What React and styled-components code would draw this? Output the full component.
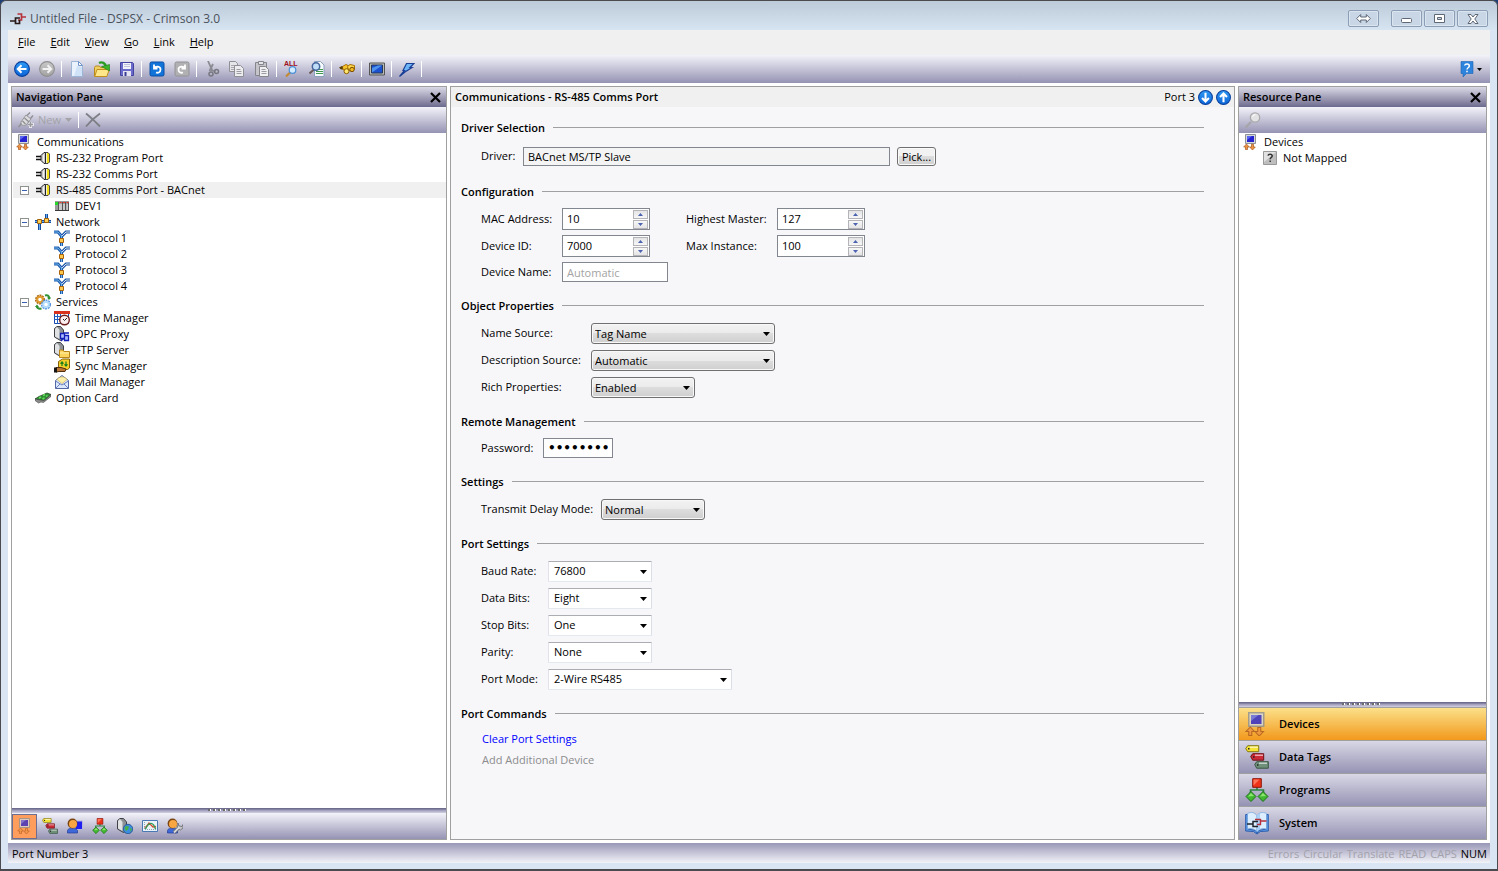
import React, { useId } from 'react';
import styled, { createGlobalStyle, css } from 'styled-components';

const GlobalStyle = createGlobalStyle`
  * { box-sizing: border-box; }
  body { margin: 0; background: #1c3f77; line-height: 14px; }
  body, button, input, select {
    font-family: 'Open Sans', 'Noto Sans', sans-serif;
    font-size: 11px;
    color: #000;
  }
  button, input, select { margin: 0; }
  ul { list-style: none; margin: 0; padding: 0; }
  svg { display: block; flex: none; }
`;

// icons

const Icon = ({ w = 16, h = 16, children }) => (
  <svg width={w} height={h} viewBox={`0 0 ${w} ${h}`} fill="none" aria-hidden="true">{children}</svg>
);

const AppIcon = () => (
  <Icon h={14}>
    <path d="M7.500 2h4v6H8M11.500 5H16" stroke="#b8323c" strokeWidth="1.700" />
    <path d="M0 9h5M10 6H5.500v5.500H9.500V8" stroke="#2a1a1a" strokeWidth="1.700" />
  </Icon>
);

const Round = ({ light, dark, rim, children, size = 16 }) => {
  const id = useId();
  return (
    <svg width={size} height={size} viewBox="0 0 16 16" fill="none" aria-hidden="true">
      <defs>
        <linearGradient id={id} x1="0" y1="0" x2="0" y2="1">
          <stop offset="0" stopColor={light} />
          <stop offset="1" stopColor={dark} />
        </linearGradient>
      </defs>
      <circle cx="8" cy="8" r="7.4" fill={`url(#${id})`} stroke={rim} strokeWidth="1.1" />
      {children}
    </svg>
  );
};

const BackIcon = () => (
  <Round light="#2f9bf5" dark="#0c63d8" rim="#0a3f9c">
    <path d="M12.5 8H4M7.5 4.2L3.8 8l3.7 3.8" stroke="#fff" strokeWidth="2" />
  </Round>
);
const ForwardIcon = () => (
  <Round light="#c9c9c9" dark="#a2a2a2" rim="#8f8f8f">
    <path d="M3.5 8H12M8.500 4.2L12.2 8l-3.700 3.800" stroke="#f2f2f2" strokeWidth="2" />
  </Round>
);
const DownIcon = () => (
  <Round light="#2f9bf5" dark="#0c63d8" rim="#0a3f9c" size={15}>
    <path d="M8 3v9M4.300 8.500L8 12.200l3.700-3.700" stroke="#fff" strokeWidth="2.200" />
  </Round>
);
const UpIcon = () => (
  <Round light="#2f9bf5" dark="#0c63d8" rim="#0a3f9c" size={15}>
    <path d="M8 13V4M4.300 7.500L8 3.800l3.700 3.700" stroke="#fff" strokeWidth="2.200" />
  </Round>
);

const NewFileIcon = () => (
  <Icon>
    <path d="M2.500 .5h7l4 4v11h-11z" fill="#eaf3fd" stroke="#9db6d6" />
    <path d="M8 5l5 1v9H5z" fill="#cfe2f8" />
    <path d="M9.500 .5v4h4z" fill="#fff" stroke="#6f95c8" />
  </Icon>
);
const OpenIcon = () => (
  <Icon>
    <path d="M.5 15.500v-9l1-1.500h4l1 1.500h5v3" fill="#f0cf62" stroke="#b88a1c" />
    <path d="M.7 15.500L3 8.500h12.300l-2.500 7z" fill="#fde788" stroke="#c08f1e" />
    <path d="M5 2c3-1.500 6.500 0 7 4" stroke="#2d9a24" strokeWidth="2.400" />
    <path d="M7.500 5.500L15.500 3.500V10z" fill="#3bb62c" stroke="#1f7d1a" strokeWidth=".6" />
  </Icon>
);
const SaveIcon = () => (
  <Icon>
    <path d="M1.500 1.500h12l1 1v12h-13z" fill="#6a6acb" stroke="#4444a0" />
    <path d="M4 2h8v6H4z" fill="#f2f2fb" />
    <path d="M5 3.500h6M5 5.500h6" stroke="#bfc0dc" />
    <path d="M4 10h8v5H4z" fill="#e3e3f2" />
    <path d="M5.500 11h2v4h-2z" fill="#3a3a94" />
  </Icon>
);
const Arrowed = ({ fill, rim, d }) => (
  <Icon>
    <rect x="1" y="1" width="14" height="14" rx="1.500" fill={fill} stroke={rim} />
    <path d={d} stroke="#fff" strokeWidth="1.800" />
  </Icon>
);
const UndoIcon = () => <Arrowed fill="#1274d8" rim="#0b4ea4" d="M5 3.500v4h3.500M5.500 7c1-2 6-2 6 1.500S8.500 12 7 11.500" />;
const RedoIcon = () => <Arrowed fill="#b1b1b3" rim="#929296" d="M11 3.500v4H7.500M10.500 7c-1-2-6-2-6 1.500S7.500 12 9 11.500" />;

const CutIcon = () => (
  <Icon>
    <path d="M4 0l4.500 10M9 3l-3.500 7" stroke="#8a8a92" strokeWidth="1.800" />
    <path d="M7 9l4.500 1.500" stroke="#8a8a92" strokeWidth="1.400" />
    <circle cx="7" cy="13" r="2" stroke="#77777f" strokeWidth="1.500" />
    <circle cx="12.500" cy="10.500" r="2" stroke="#77777f" strokeWidth="1.500" />
  </Icon>
);
const CopyIcon = () => (
  <Icon>
    <path d="M.5 .5h6l2 2v8h-8z" fill="#e6e6ea" stroke="#8f8f96" />
    <path d="M2 4.500h4M2 6.500h3M2 8.500h3" stroke="#a9a9b0" />
    <path d="M5.500 4.500h6l3 3v8h-9z" fill="#ededf0" stroke="#8f8f96" />
    <path d="M7.500 8.500h4M7.500 10.500h5M7.500 12.500h5" stroke="#9b9ba2" />
  </Icon>
);
const PasteIcon = () => (
  <Icon>
    <path d="M1.500 1.500h11v13h-11z" fill="#c4c4ca" stroke="#85858c" />
    <path d="M4.500 .5h5v3h-5z" fill="#e6e6ea" stroke="#85858c" />
    <path d="M5.500 5.500h6l3 3v7h-9z" fill="#f0f0f3" stroke="#85858c" />
    <path d="M7.500 8.500h4M7.500 10.500h5M7.500 12.500h5" stroke="#9b9ba2" />
  </Icon>
);
const FindAllIcon = () => (
  <Icon>
    <text x="0" y="5" fontSize="7" fontWeight="700" fill="#a01020" fontFamily="Liberation Sans, sans-serif">ALL</text>
    <path d="M6.500 11L2 15.500" stroke="#c28a32" strokeWidth="2.200" />
    <circle cx="8.500" cy="9" r="3.300" fill="#d3ecff" stroke="#4d8fd6" strokeWidth="1.200" />
  </Icon>
);
const FindIcon = () => (
  <Icon>
    <path d="M5.500 .5h6l3.500 3.500v11.500h-9.500z" fill="#f6fafd" stroke="#8aa1bd" />
    <path d="M7 8.500h7M7 10.500h7M7 12.500h7" stroke="#3e9a4a" />
    <path d="M5 8.500L.5 12.500" stroke="#6b5c58" strokeWidth="2" />
    <circle cx="7" cy="5.500" r="3.700" fill="#bfdcf8" stroke="#44659c" strokeWidth="1.500" />
  </Icon>
);
const BinocularsIcon = () => (
  <Icon>
    <path d="M1 7l6-3.500 3 1.500-2 5-3-1z" fill="#f6c52b" stroke="#a66f08" />
    <path d="M8.500 5.500L11 3.500l4.500 1V8l-2 2.500-4-1.500z" fill="#ffd94a" stroke="#a66f08" />
    <path d="M0 6.500L3 5l1.500 2.500L2 8.500z" fill="#5d4208" />
    <circle cx="7.500" cy="10.200" r="2.500" fill="#ffe66d" stroke="#8c5e06" />
    <circle cx="13" cy="8.500" r="2.200" fill="#f1b822" stroke="#7a4d04" />
  </Icon>
);
const ScreenIcon = () => (
  <Icon>
    <path d="M.5 2h15v12H.5z" fill="#b9bdb6" stroke="#555" />
    <path d="M2.500 4h11v8h-11z" fill="#1b50d0" stroke="#26375a" />
    <path d="M3 11.500V7l6-2.500h4z" fill="#4d93ee" />
  </Icon>
);
const FlashIcon = () => (
  <Icon>
    <path d="M7.500 2.500h7.500L11 6.500h2L6 11l-5.500 4.500L5.500 9.500H4z" fill="#6cb5f7" stroke="#1c3f96" strokeWidth="1.200" />
  </Icon>
);
const HelpIcon = () => (
  <Icon>
    <path d="M2 .5h12v12H7.500L4 16v-3.500H2z" fill="#2e83dc" stroke="#1f64b4" strokeWidth=".6" />
    <path d="M5.700 4.500C6 2.500 10.300 2.200 10.300 5c0 1.800-2.300 1.700-2.300 3.500M8 9.700v1.500" stroke="#fff" strokeWidth="1.500" />
  </Icon>
);

const PlugIcon = () => (
  <Icon>
    <path d="M3 10l5-7 5 4-5 6c-3 1-6 0-5-3z" fill="#dcdcde" stroke="#96969a" />
    <path d="M9 3.500L12 .5M12.500 6.500l2.500-3M3.500 11.500l-3 3.500M6.500 6l4.500 4M4.500 9l3 3" stroke="#8e8e92" strokeWidth="1.300" />
    <path d="M10 12.500h6M12.500 10v6" stroke="#e8e8ee" strokeWidth="3" />
    <path d="M10 12.500h5M12.500 10v5" stroke="#9a9a9e" strokeWidth="1.500" />
  </Icon>
);
const DeleteIcon = () => (
  <Icon>
    <path d="M1 1.500c4 3 9 8 14 13M15 1.500C10 5 5 9.500 1 14.500" stroke="#7d7f86" strokeWidth="1.800" />
  </Icon>
);
const SearchIcon = () => (
  <Icon>
    <path d="M6 10L.5 15.500" stroke="#a5a5a8" strokeWidth="2.200" />
    <circle cx="10" cy="5.500" r="4.700" fill="#e2e2e4" stroke="#aaaaad" strokeWidth="1.300" />
    <path d="M7.500 5a3 3 0 013-2.500" stroke="#fff" />
  </Icon>
);

const DevicesIcon = ({ size = 16 }) => (
  <svg width={size} height={size} viewBox="0 0 16 16" fill="none" aria-hidden="true">
    <path d="M2.500 .5h10v9h-10z" fill="#d5d8da" stroke="#8d9094" />
    <path d="M4 2h7v6H4z" fill="#2623d0" />
    <path d="M4 2h5l-5 4z" fill="#5a67ee" />
    <path d="M3.500 10L.7 13h1.800v2.700h2V13h1.800zM9.500 16l2.800-3h-1.800v-2.700h-2V13H6.700z" fill="#ef9442" stroke="#a9581c" strokeWidth=".7" />
  </svg>
);
const PortIcon = () => (
  <Icon>
    <path d="M1 6.500h5M1 9.500h5" stroke="#111" strokeWidth="1.600" />
    <path d="M1 8h5" stroke="#bbb" />
    <path d="M10.500 2.500H9L6 5.500v5l3 3h1.500z" fill="#c9c9c9" stroke="#222" />
    <path d="M8.500 4.500v7" stroke="#f2f2f2" />
    <path d="M11 3h1.500v10H11z" fill="#efeed8" />
    <path d="M12 3h2v10h-2z" fill="#f2dd18" />
    <path d="M10.500 2.500H13l1.500 1.500v8L13 13.500h-2.500" stroke="#222" strokeWidth=".8" />
  </Icon>
);
const PlcIcon = () => (
  <Icon>
    <path d="M1 3h14v10H1z" fill="#9a9a9a" />
    <path d="M5 6h3v6H5zM9 6h2.500v6H9zM12.500 6H14v6h-1.500z" fill="#c9c9c9" />
    <path d="M4.500 4v9M8.500 4v9M11.500 4v9M14.500 4v9" stroke="#555" />
    <path d="M1 12.500h14" stroke="#3a3a3a" />
    <path d="M1 4h3v3H1z" fill="#25d829" />
    <path d="M5.500 4h2v1h-2zM9 4h2v1H9zM12.500 4h2v1h-2z" fill="#ef3a2c" />
  </Icon>
);
const NetworkIcon = () => (
  <Icon>
    <path d="M0 7.500h16M4.500 7v9M11.500 0v7" stroke="#154b9f" strokeWidth="3" />
    <path d="M0 7.500h16M4.500 7v9M11.500 0v7" stroke="#66abec" />
    <path d="M2.500 5.500h4v4h-4zM9.500 4.500h4v4h-4z" fill="#fcd158" stroke="#a46009" />
  </Icon>
);
const ProtocolIcon = () => (
  <Icon>
    <path d="M0 2h4l3.500 4M16 2h-4L8 6M7.500 5v11" stroke="#1d5aad" strokeWidth="3" />
    <path d="M0 2h4l3.500 4M7.500 5v11" stroke="#6fb5ec" />
    <path d="M16 2h-4L8 6" stroke="#dbe3e8" />
    <path d="M5.500 8.500h4v4h-4z" fill="#fcc94e" stroke="#a86208" />
  </Icon>
);
const ServicesIcon = () => (
  <Icon>
    <path d="M10 1.500c3-1 4 .5 4.500 3.500M1.500 12c.5 2 2.500 3 5 2.500" stroke="#2f9130" strokeWidth="2" />
    <path d="M12 3.500h4l-2 2.500zM0 13l2-2.500L4 13z" fill="#2f9130" />
    <circle cx="5" cy="5.500" r="3.600" stroke="#a8640c" strokeWidth="2.800" strokeDasharray="1.700 .6" />
    <circle cx="5" cy="5.500" r="2.800" stroke="#e09a2c" strokeWidth="2" />
    <circle cx="11" cy="10.500" r="3.600" stroke="#4b8fdb" strokeWidth="2.800" strokeDasharray="1.700 .6" />
    <circle cx="11" cy="10.500" r="2.800" stroke="#b5dcfa" strokeWidth="2" />
  </Icon>
);
const TimeIcon = () => (
  <Icon>
    <path d="M.5 2.500h14v11H.5z" fill="#fff" stroke="#1747a8" />
    <path d="M0 6.500h14M0 9.500h14M3.500 4v10M6.500 4v10" stroke="#1f5fc4" />
    <path d="M0 1h16v3H0z" fill="#d9321c" />
    <circle cx="10.500" cy="10" r="4.800" fill="#fbeeee" stroke="#6e1f1c" strokeWidth="1.400" />
    <path d="M13 8l-2.500 2.500L9 9" stroke="#222" />
  </Icon>
);
const ServerBox = () => (
  <g>
    <path d="M.5 2.500L3 .5h3.500L9.500 4v9l-3 1.500L.5 11z" fill="#8d9095" stroke="#3f4145" />
    <path d="M1 3l2-2 2.500 3v9L1 10.500z" fill="#dfe1e3" />
  </g>
);
const OpcIcon = () => (
  <Icon>
    <ServerBox />
    <path d="M6.500 7.500h4v5h-4zM10.500 9.500h4v5h-4zM7 15l3-3M10 7h5" stroke="#1320b8" strokeWidth="1.300" fill="#aebcff" />
  </Icon>
);
const FtpIcon = () => (
  <Icon>
    <ServerBox />
    <path d="M5.500 8h3.500l1 1.500h5.500v6h-10z" fill="#fbd560" stroke="#b8851a" />
    <path d="M6 11h9" stroke="#fff0a8" />
  </Icon>
);
const SyncIcon = () => (
  <Icon>
    <path d="M4.500 3.500l4-2.500h7v9l-2 1.500h-9z" fill="#f6ce29" stroke="#81600a" />
    <path d="M8 8V4M6.500 5.700L8 4l1.500 1.700M12 3.500V8M10.500 6.300L12 8l1.500-1.700" stroke="#17801b" strokeWidth="1.200" />
    <path d="M2 9.500h5l5 1.500-1 2.500H5L2 14z" fill="#b9773a" stroke="#54300f" />
    <path d="M0 9.500h3v5H0z" fill="#151515" />
  </Icon>
);
const MailIcon = () => (
  <Icon>
    <path d="M1.500 6.500L8 1.500l6.500 5v8h-13z" fill="#dbe7fb" stroke="#5366a5" />
    <path d="M3 5.500c2-3.500 8-3.500 10 0L8 9.500z" fill="#fdf0a8" stroke="#cfae4a" strokeWidth=".6" />
    <path d="M1.500 7L8 11l6.500-4M1.500 14.500L6 10M14.500 14.500L10 10" stroke="#6d80bd" />
  </Icon>
);
const CardIcon = () => (
  <Icon>
    <path d="M0 9l4-2.500L12 3l4 1.500-7 6z" fill="#2d8f34" stroke="#2c4a2c" strokeWidth=".8" />
    <path d="M0 9l9 1.700 7-6V6.500l-7.500 6L6 12l-2.500 1L0 10.500z" fill="#8b8d8b" stroke="#333" strokeWidth=".5" />
    <path d="M4 8l2-1M7.500 9l2-1M8 5.500l2-1M11 6.500l1.500-1" stroke="#67e05c" strokeWidth="1.500" />
  </Icon>
);
const UnmappedIcon = () => (
  <Icon>
    <path d="M1.500 1.500h13v13h-13z" fill="#bebebe" stroke="#999" />
    <path d="M2 2h12L2 12z" fill="#e1e1e1" />
    <path d="M6 5.700C6.300 3.700 10.200 3.700 10.200 6c0 1.500-2 1.600-2 3.200M8.200 10.500v1.600" stroke="#333" strokeWidth="1.500" />
  </Icon>
);

const TagsIcon = ({ size = 16 }) => (
  <svg width={size} height={size} viewBox="0 0 24 24" fill="none" aria-hidden="true">
    <path d="M.7 3.500l2-2.800h11v6h-11z" fill="#f5e336" stroke="#857a10" />
    <path d="M5.700 11.500l2-2.800h11v6.500h-11z" fill="#cc2a36" stroke="#6f1015" />
    <path d="M9.700 19.500l2-2.800h11.600v6.500H11.700z" fill="#6f9079" stroke="#3a5443" />
    <path d="M5 2.300h8M10 10.300h8M14 18.300h8" stroke="#fff" strokeWidth="1.500" opacity=".6" />
    <path d="M3 3.700h1.500M8 12h1.500M12 20h1.500" stroke="#222" strokeWidth="1.500" />
  </svg>
);
const ProgramsIcon = ({ size = 16 }) => (
  <svg width={size} height={size} viewBox="0 0 24 24" fill="none" aria-hidden="true">
    <path d="M12 9v3M5.500 16v-4h13v4" stroke="#2c8440" strokeWidth="1.600" />
    <path d="M7.700 .7h8.600v8.600H7.700z" fill="#ef3319" stroke="#8e1408" />
    <path d="M8.500 1.500h6l-6 6z" fill="#ff7458" />
    <path d="M6 13.500l5 5-5 5-5-5zM18 13.500l5 5-5 5-5-5z" fill="#42b832" stroke="#1c701a" />
    <path d="M6 15l3 3-6 .5zM18 15l3 3-6 .5z" fill="#8be56c" />
  </svg>
);
const SystemIcon = () => (
  <Icon w={24} h={24}>
    <path d="M.7 3.500h2V18l8 1.500L12 22l1.500-2.500L21.500 18V3.500h1.800V20l-8 .5L12 23l-3.500-2.500L.7 20z" fill="#5f9ce6" stroke="#2c5dae" />
    <path d="M2.500 2.500c4-2 7-1 9.500 2v16c-3-3-6-3.500-9.500-2.500zM21.500 2.500c-4-2-7-1-9.500 2v16c3-3 6-3.500 9.500-2.500z" fill="#dceefd" stroke="#72a5de" strokeWidth=".7" />
    <path d="M12 4.500v16l3-2.500V2z" fill="#a9d0f6" />
    <path d="M10 8.500h5.500v5H12M15.500 10h6" stroke="#b5303b" strokeWidth="1.400" />
    <path d="M2 13h6M13 10.500H8v5h5" stroke="#20242c" strokeWidth="1.500" />
  </Icon>
);
const Person = () => (
  <g>
    <path d="M.5 15v-2.500c1-3.500 8.500-3.500 10 0V15z" fill="#3e68d8" stroke="#233e95" strokeWidth=".7" />
    <circle cx="5.500" cy="5.500" r="4.900" fill="#7a4410" />
    <circle cx="6" cy="6" r="4" fill="#f7a642" />
  </g>
);
const UserScreenIcon = () => (
  <Icon>
    <path d="M8 3h7.500v8.500H8z" fill="#1f1ff0" stroke="#b8b8dd" />
    <Person />
  </Icon>
);
const UserToolsIcon = () => (
  <Icon>
    <Person />
    <path d="M7 14.500l5-5" stroke="#67686c" strokeWidth="3.400" />
    <path d="M11 5l1 3 3 .5 1-2v3.500L13.500 12 10.500 10z" fill="#c4c5c8" stroke="#67686c" strokeWidth=".8" />
    <path d="M7 14.500l5.500-5.500" stroke="#d7d8db" strokeWidth="1.800" />
  </Icon>
);
const WebIcon = () => (
  <Icon>
    <ServerBox />
    <circle cx="11" cy="11" r="4.700" fill="#3c8ddd" stroke="#1c4e92" strokeWidth=".8" />
    <path d="M9 8l3 .5-1 3-2 1.500-1.500-3zM13 10l2 1-1.500 3z" fill="#48b246" />
  </Icon>
);
const ChartIcon = () => (
  <Icon>
    <path d="M.5 2.500h15v11H.5z" fill="#e9f3f8" stroke="#4a78b4" />
    <path d="M2.500 4v7.500H14" stroke="#8aa3b5" strokeDasharray="1 1" />
    <path d="M2.500 9.500l2-1L7 5l4 4 3-.5" stroke="#dd4a2e" strokeWidth="1.300" />
    <path d="M3.500 11c3-7 7.500-8 10 0" stroke="#2f9d58" strokeWidth="1.400" />
  </Icon>
);

const Cross = () => (
  <Icon w={12} h={11}><path d="M1 1l9 9M10 1l-9 9" stroke="#000" strokeWidth="2.200" /></Icon>
);
const Caret = ({ fill = '#000' }) => (
  <Icon w={7} h={4}><path d="M0 0h7L3.500 4z" fill={fill} /></Icon>
);
const SpinCaret = () => (
  <Icon w={5} h={3}><path d="M0 0h5L2.500 3z" fill="#4b62b0" /></Icon>
);

// window frame

const Window = styled.div`
  display: flex;
  flex-direction: column;
  min-height: 100vh;
  padding: 0 7px 6px;
  border: 1px solid #4a4a4f;
  border-bottom-width: 2px;
  border-radius: 6px 6px 0 0;
  background: #d9e5f2 linear-gradient(#bccad9, #d7e4f1) 0 0 / 100% 29px no-repeat;
`;

const TitleBar = styled.header`
  display: flex;
  align-items: center;
  gap: 4px;
  height: 29px;
  padding: 6px 2px 0;
`;

const TitleText = styled.h1`
  flex: 1;
  margin: 0;
  font-size: 12px;
  font-weight: 400;
  color: #4a525c;
`;

const CaptionButtons = styled.div`
  display: flex;
  gap: 2px;
`;

const CaptionButton = styled.button`
  display: grid;
  place-items: center;
  width: 31px;
  height: 17px;
  padding: 0;
  margin-right: ${({ $apart }) => ($apart ? '10px' : 0)};
  border: 1px solid #8c9eb6;
  border-radius: 2px;
  background: #c9d6e5;
  box-shadow: inset 0 0 0 1px #dbe5f0;
`;

const MenuBar = styled.nav`
  display: flex;
  align-items: center;
  gap: 1px;
  height: 25px;
  padding: 0 2px 2px 3px;
  background: #f0f0f0;
`;

const MenuButton = styled.button`
  padding: 0 7px;
  border: 0;
  background: none;
  line-height: 14px;
`;

const bar = css`
  display: flex;
  align-items: center;
  background: linear-gradient(#f3f3fa, #9593b3);
`;

const ToolBar = styled.div`
  ${bar}
  height: 28px;
  padding: 0 8px 0 1px;
`;

const ToolButton = styled.button`
  display: grid;
  place-items: center;
  width: 25px;
  height: 25px;
  padding: 0;
  border: 1px solid ${({ $active }) => ($active ? '#6f6d8f' : 'transparent')};
  background: ${({ $active }) => ($active ? '#ff9d5c' : 'none')};

  > svg { opacity: ${({ $active }) => ($active ? 0.75 : 1)}; }
`;

const Separator = styled.span`
  width: 1px;
  height: 16px;
  margin: 0 2px;
  background: #fff;
`;

const Spacer = styled.span`
  flex: 1;
`;

const HelpButton = styled.button`
  display: flex;
  align-items: center;
  gap: 2px;
  padding: 0;
  border: 0;
  background: none;
`;

const Workspace = styled.div`
  display: flex;
  flex: 1;
  gap: 3px;
  padding: 3px;
  background: #fff;
`;

const StatusBar = styled.footer`
  ${bar}
  gap: 4px;
  height: 20px;
  padding: 2px 3px 0 4px;
  background: linear-gradient(#9997b6, #f3f3f9);
`;

const Indicator = styled.span`
  color: ${({ $on }) => ($on ? '#000' : '#a3a2ab')};
`;

// panes

const Pane = styled.section`
  display: flex;
  flex-direction: column;
  flex: 0 0 ${({ $width }) => $width}px;
  border: 1px solid #a0a0a0;
`;

const PaneHeader = styled.div`
  display: flex;
  align-items: center;
  justify-content: space-between;
  height: 20px;
  padding: 0 4px;
  background: linear-gradient(#dad9e6, #6d6b8d);
`;

const PaneTitle = styled.h2`
  margin: 0;
  font-size: 11px;
  font-weight: 600;
`;

const PlainButton = styled.button`
  display: block;
  padding: 0;
  border: 0;
  background: none;
`;

const PaneTools = styled.div`
  ${bar}
  height: 26px;
  padding: 0 6px;
`;

const NewButton = styled.button`
  display: flex;
  align-items: center;
  gap: 4px;
  padding: 0 4px 0 0;
  border: 0;
  background: none;
  line-height: 14px;
  &:disabled { color: #a3a3a8; }
`;

const Tree = styled.ul`
  && {
    flex: 1;
    padding: 1px 0 0 1px;
  }
`;

const TreeRow = styled.li`
  display: flex;
  align-items: center;
  gap: 5px;
  height: 16px;
  padding-left: ${({ $level }) => [3, 7, 41][$level]}px;
  background: ${({ $selected }) => ($selected ? '#f0f0f0' : 'none')};
  white-space: nowrap;
`;

const Expander = styled.button`
  display: grid;
  place-items: center;
  width: 9px;
  height: 9px;
  margin-right: 1px;
  padding: 0;
  border: 1px solid #919191;
  background: #fff;
  visibility: ${({ $shown }) => ($shown ? 'visible' : 'hidden')};

  &::after {
    content: '';
    width: 5px;
    height: 1px;
    background: #3b5fae;
  }
`;

const Splitter = styled.div`
  display: flex;
  justify-content: center;
  height: 5px;
  background: linear-gradient(#6f6d8f 1px, #9a98b8 2px, #d2d1e1);
`;

const Grip = styled.span`
  width: 38px;
  height: 2px;
  margin: 1px 4px 0 0;
  background: repeating-linear-gradient(90deg, #6b6b6b 0 2px, #fff 2px 3px, transparent 3px 5px);
`;

const Categories = styled.div`
  ${bar}
  height: 26px;
`;

const CategoryButton = styled.button`
  display: flex;
  align-items: center;
  gap: 10px;
  height: 33px;
  padding: 0 6px;
  border: 0;
  border-top: 1px solid #a0a0a0;
  background: ${({ $active }) => ($active
    ? 'linear-gradient(#fbe08a, #f2991c)'
    : 'linear-gradient(#d9d8e6, #9593b3)')};
  font-weight: 600;
  line-height: 14px;

  > svg { opacity: ${({ $active }) => ($active ? 0.8 : 1)}; }
`;

// editor

const Editor = styled.main`
  flex: 1;
  min-width: 0;
  border: 1px solid #a0a0a0;
  background: #f7f7fa;
`;

const EditorHeader = styled.div`
  display: flex;
  align-items: center;
  gap: 3px;
  height: 20px;
  padding: 0 3px 0 4px;
  background: #f0f0f0;
`;

const Form = styled.form`
  padding: 13px 30px 0 10px;
`;

const Section = styled.fieldset`
  min-width: 0;
  margin: 0 0 16px;
  padding: 0;
  border: 0;
`;

const SectionTitle = styled.h3`
  display: flex;
  align-items: center;
  gap: 8px;
  height: 16px;
  margin: 0 0 8px;
  font-size: 11px;
  font-weight: 600;

  &::after {
    content: '';
    flex: 1;
    height: 1px;
    margin-bottom: 1px;
    background: #a0a0a0;
  }
`;

const Rows = styled.div`
  display: grid;
  grid-template-columns: ${({ $columns }) => $columns};
  align-items: center;
  row-gap: 5px;
  min-height: ${({ $tall }) => ($tall ? '24px' : 0)};
  padding-left: 20px;
  white-space: nowrap;
`;

const Line = styled.div`
  display: flex;
  align-items: center;
  gap: 7px;
`;

const TextBox = styled.input`
  width: ${({ $width }) => $width}px;
  height: ${({ readOnly }) => (readOnly ? 19 : 20)}px;
  padding: 0 4px;
  border: 1px solid #82868f;
  border-radius: 0;
  background: ${({ readOnly }) => (readOnly ? '#f4f4f4' : '#fff')};
  outline: 0;
  &::placeholder { color: #a3a3a3; opacity: 1; }
  &[type='password'] {
    font-family: 'DejaVu Sans', sans-serif;
    font-size: 12px;
    font-weight: 700;
  }
`;

const PickButton = styled.button`
  width: 39px;
  height: 19px;
  padding: 0;
  border: 1px solid #707070;
  border-radius: 3px;
  background: linear-gradient(#f2f2f2 50%, #dddddd 50%, #cfcfcf);
  box-shadow: inset 0 0 0 1px #fafafa;
`;

const NumberFrame = styled.div`
  display: flex;
  align-items: center;
  width: 88px;
  height: 22px;
  padding-right: 1px;
  border: 1px solid #82868f;
  background: #fff;
`;

const NumberInput = styled.input`
  flex: 1;
  min-width: 0;
  padding: 0 4px 2px;
  border: 0;
  background: none;
  outline: 0;
`;

const SpinButtons = styled.div`
  display: grid;
  gap: 1px;
`;

const SpinButton = styled.button`
  display: grid;
  place-items: center;
  width: 15px;
  height: 9px;
  padding: 0;
  border: 1px solid #b4b4b8;
  background: linear-gradient(#f7f7f7, #e4e4e6);
  transform: ${({ $up }) => ($up ? 'rotate(180deg)' : 'none')};
`;

const SelectFrame = styled.div`
  display: grid;
  align-items: center;
  width: ${({ $wide }) => ($wide ? 184 : 104)}px;
  height: 22px;

  > * { grid-area: 1 / 1; }
  > svg {
    justify-self: end;
    margin: 2px 5px 0 0;
    pointer-events: none;
  }
`;

const Select = styled.select`
  width: 100%;
  height: 21px;
  padding: 0 16px 0 3px;
  appearance: none;
  border: 1px solid #707070;
  border-radius: 3px;
  background: linear-gradient(#f2f2f2, #ebebeb 50%, #dddddd 50%, #cfcfcf);
  box-shadow: inset 0 0 0 1px #f8f8f8;
  outline: 0;

  ${({ $flat }) => $flat && css`
    padding: 0 16px 2px 5px;
    border-color: #abadb3 #dbdfe6 #e3e9ef #e2e3ea;
    border-radius: 1px;
    background: #fff;
    box-shadow: none;
  `}
`;

const Commands = styled.div`
  display: grid;
  justify-items: start;
  gap: 5px;
  padding: 1px 0 0 21px;
  line-height: 16px;

  a { color: #0000ff; text-decoration: none; }
  button { line-height: 16px; color: #8c8c8c; }
`;

const Text = ({ label, ...rest }) => {
  const id = useId();
  return (
    <>
      <label htmlFor={id}>{label}</label>
      <TextBox id={id} {...rest} />
    </>
  );
};

const NumberField = ({ label, value }) => {
  const id = useId();
  return (
    <>
      <label htmlFor={id}>{label}</label>
      <NumberFrame>
        <NumberInput id={id} defaultValue={value} inputMode="numeric" />
        <SpinButtons>
          <SpinButton type="button" $up aria-label="Increase"><SpinCaret /></SpinButton>
          <SpinButton type="button" aria-label="Decrease"><SpinCaret /></SpinButton>
        </SpinButtons>
      </NumberFrame>
    </>
  );
};

const SelectField = ({ label, value, wide, flat }) => {
  const id = useId();
  return (
    <>
      <label htmlFor={id}>{label}</label>
      <SelectFrame $wide={wide}>
        <Select id={id} $flat={flat} defaultValue={value}>
          <option>{value}</option>
        </Select>
        <Caret />
      </SelectFrame>
    </>
  );
};

const navigation = [
  { text: 'Communications', icon: DevicesIcon, level: 0 },
  { text: 'RS-232 Program Port', icon: PortIcon, level: 1 },
  { text: 'RS-232 Comms Port', icon: PortIcon, level: 1 },
  { text: 'RS-485 Comms Port - BACnet', icon: PortIcon, level: 1, open: true, selected: true },
  { text: 'DEV1', icon: PlcIcon, level: 2 },
  { text: 'Network', icon: NetworkIcon, level: 1, open: true },
  { text: 'Protocol 1', icon: ProtocolIcon, level: 2 },
  { text: 'Protocol 2', icon: ProtocolIcon, level: 2 },
  { text: 'Protocol 3', icon: ProtocolIcon, level: 2 },
  { text: 'Protocol 4', icon: ProtocolIcon, level: 2 },
  { text: 'Services', icon: ServicesIcon, level: 1, open: true },
  { text: 'Time Manager', icon: TimeIcon, level: 2 },
  { text: 'OPC Proxy', icon: OpcIcon, level: 2 },
  { text: 'FTP Server', icon: FtpIcon, level: 2 },
  { text: 'Sync Manager', icon: SyncIcon, level: 2 },
  { text: 'Mail Manager', icon: MailIcon, level: 2 },
  { text: 'Option Card', icon: CardIcon, level: 1 },
];

const toolbar = [
  ['Back', BackIcon], ['Forward', ForwardIcon], null,
  ['New', NewFileIcon], ['Open', OpenIcon], ['Save', SaveIcon], null,
  ['Undo', UndoIcon], ['Redo', RedoIcon], null,
  ['Cut', CutIcon], ['Copy', CopyIcon], ['Paste', PasteIcon], null,
  ['Find all', FindAllIcon], ['Find', FindIcon], null,
  ['Browse', BinocularsIcon], null,
  ['Emulator', ScreenIcon], null,
  ['Download', FlashIcon], null,
];

const views = [
  ['Communications', DevicesIcon], ['Data Tags', TagsIcon], ['Display Pages', UserScreenIcon],
  ['Programs', ProgramsIcon], ['Web Server', WebIcon], ['Data Logger', ChartIcon], ['Security', UserToolsIcon],
];

const categories = [
  ['Devices', DevicesIcon], ['Data Tags', TagsIcon], ['Programs', ProgramsIcon], ['System', SystemIcon],
];

const NavigationPane = () => (
  <Pane $width={436}>
    <PaneHeader>
      <PaneTitle>Navigation Pane</PaneTitle>
      <PlainButton aria-label="Close"><Cross /></PlainButton>
    </PaneHeader>
    <PaneTools>
      <NewButton disabled><PlugIcon />New<Caret fill="#a3a3a8" /></NewButton>
      <Separator />
      <ToolButton aria-label="Delete"><DeleteIcon /></ToolButton>
    </PaneTools>
    <Tree>
      {navigation.map(({ text, icon: Glyph, level, open, selected }) => (
        <TreeRow key={text} $level={level} $selected={selected}>
          {level === 1 && <Expander $shown={open} aria-label={`Collapse ${text}`} />}
          <Glyph />
          <span>{text}</span>
        </TreeRow>
      ))}
    </Tree>
    <Splitter><Grip /></Splitter>
    <Categories>
      {views.map(([name, Glyph], i) => (
        <ToolButton key={name} $active={i === 0} aria-label={name}><Glyph /></ToolButton>
      ))}
    </Categories>
  </Pane>
);

const PortEditor = () => (
  <Editor>
    <EditorHeader>
      <PaneTitle>Communications - RS-485 Comms Port</PaneTitle>
      <Spacer />
      <span>Port 3</span>
      <PlainButton aria-label="Next port"><DownIcon /></PlainButton>
      <PlainButton aria-label="Previous port"><UpIcon /></PlainButton>
    </EditorHeader>
    <Form onSubmit={(e) => e.preventDefault()}>
      <Section>
        <SectionTitle>Driver Selection</SectionTitle>
        <Rows $columns="42px auto" $tall>
          <label htmlFor="driver">Driver:</label>
          <Line>
            <TextBox id="driver" $width={367} readOnly value="BACnet MS/TP Slave" />
            <PickButton type="button">Pick...</PickButton>
          </Line>
        </Rows>
      </Section>
      <Section>
        <SectionTitle>Configuration</SectionTitle>
        <Rows $columns="81px 124px 91px auto">
          <NumberField label="MAC Address:" value="10" />
          <NumberField label="Highest Master:" value="127" />
          <NumberField label="Device ID:" value="7000" />
          <NumberField label="Max Instance:" value="100" />
          <Text label="Device Name:" $width={106} placeholder="Automatic" />
        </Rows>
      </Section>
      <Section>
        <SectionTitle>Object Properties</SectionTitle>
        <Rows $columns="110px auto">
          <SelectField label="Name Source:" value="Tag Name" wide />
          <SelectField label="Description Source:" value="Automatic" wide />
          <SelectField label="Rich Properties:" value="Enabled" />
        </Rows>
      </Section>
      <Section>
        <SectionTitle>Remote Management</SectionTitle>
        <Rows $columns="62px auto">
          <Text label="Password:" $width={70} type="password" defaultValue="password" />
        </Rows>
      </Section>
      <Section>
        <SectionTitle>Settings</SectionTitle>
        <Rows $columns="120px auto">
          <SelectField label="Transmit Delay Mode:" value="Normal" />
        </Rows>
      </Section>
      <Section>
        <SectionTitle>Port Settings</SectionTitle>
        <Rows $columns="67px auto">
          <SelectField label="Baud Rate:" value="76800" flat />
          <SelectField label="Data Bits:" value="Eight" flat />
          <SelectField label="Stop Bits:" value="One" flat />
          <SelectField label="Parity:" value="None" flat />
          <SelectField label="Port Mode:" value="2-Wire RS485" flat wide />
        </Rows>
      </Section>
      <Section>
        <SectionTitle>Port Commands</SectionTitle>
        <Commands>
          <a href="#clear">Clear Port Settings</a>
          <PlainButton type="button" disabled>Add Additional Device</PlainButton>
        </Commands>
      </Section>
    </Form>
  </Editor>
);

const ResourcePane = () => (
  <Pane $width={249}>
    <PaneHeader>
      <PaneTitle>Resource Pane</PaneTitle>
      <PlainButton aria-label="Close"><Cross /></PlainButton>
    </PaneHeader>
    <PaneTools>
      <PlainButton aria-label="Search"><SearchIcon /></PlainButton>
    </PaneTools>
    <Tree>
      <TreeRow $level={0}><DevicesIcon /><span>Devices</span></TreeRow>
      <TreeRow $level={1}><Expander aria-hidden="true" tabIndex={-1} /><UnmappedIcon /><span>Not Mapped</span></TreeRow>
    </Tree>
    <Splitter><Grip /></Splitter>
    {categories.map(([name, Glyph], i) => (
      <CategoryButton key={name} $active={i === 0}><Glyph size={24} />{name}</CategoryButton>
    ))}
  </Pane>
);

const App = () => (
  <>
    <GlobalStyle />
    <Window>
      <TitleBar>
        <AppIcon />
        <TitleText>Untitled File - DSPSX - Crimson 3.0</TitleText>
        <CaptionButtons>
          <CaptionButton $apart aria-label="Switch display">
            <Icon w={15} h={9}><path d="M.7 4.500l4-4v2.500h5.600V.5l4 4-4 4V6H4.700v2.500z" fill="#fff" stroke="#5e6775" /></Icon>
          </CaptionButton>
          <CaptionButton aria-label="Minimize">
            <Icon w={11} h={9}><rect x=".5" y="4.500" width="10" height="4" rx="1" fill="#fff" stroke="#5e6775" /></Icon>
          </CaptionButton>
          <CaptionButton aria-label="Maximize">
            <Icon w={11} h={9}>
              <path d="M.5 .5h10v8H.5z" fill="#fff" stroke="#5e6775" />
              <path d="M3.500 3.500h4v2h-4z" fill="#c9d6e5" stroke="#5e6775" />
            </Icon>
          </CaptionButton>
          <CaptionButton aria-label="Close">
            <Icon w={12} h={10}>
              <path d="M1 .5h3l2 2.500L8 .5h3L7.800 5 11 9.500H8L6 7 4 9.500H1L4.200 5z" fill="#fff" stroke="#5e6775" />
            </Icon>
          </CaptionButton>
        </CaptionButtons>
      </TitleBar>
      <MenuBar>
        {['File', 'Edit', 'View', 'Go', 'Link', 'Help'].map((name) => (
          <MenuButton key={name}><u>{name[0]}</u>{name.slice(1)}</MenuButton>
        ))}
      </MenuBar>
      <ToolBar>
        {toolbar.map((item, i) => {
          if (!item) return <Separator key={i} />;
          const [name, Glyph] = item;
          return <ToolButton key={name} aria-label={name}><Glyph /></ToolButton>;
        })}
        <Spacer />
        <HelpButton aria-label="Help"><HelpIcon /><Icon w={5} h={3}><path d="M0 0h5L2.500 3z" fill="#000" /></Icon></HelpButton>
      </ToolBar>
      <Workspace>
        <NavigationPane />
        <PortEditor />
        <ResourcePane />
      </Workspace>
      <StatusBar>
        <span>Port Number 3</span>
        <Spacer />
        {['Errors', 'Circular', 'Translate', 'READ', 'CAPS'].map((name) => <Indicator key={name}>{name}</Indicator>)}
        <Indicator $on>NUM</Indicator>
      </StatusBar>
    </Window>
  </>
);

export default App;
